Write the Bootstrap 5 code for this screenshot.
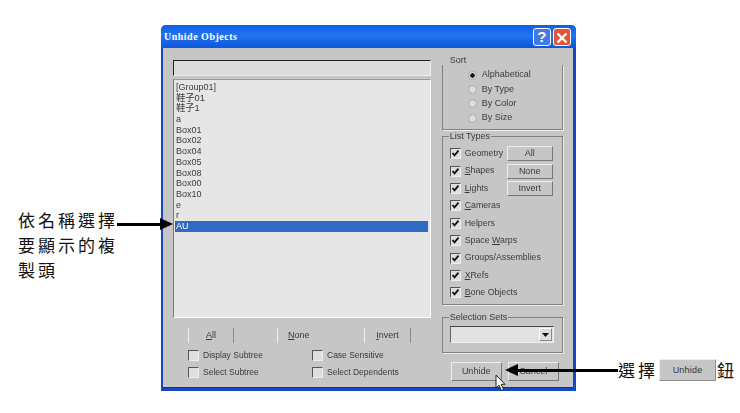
<!DOCTYPE html>
<html lang="zh-Hant">
<head>
    <meta charset="UTF-8">
    <meta name="viewport" content="width=device-width, initial-scale=1.0">
    <title>Unhide Objects</title>
    <link href="https://cdn.jsdelivr.net/npm/bootstrap@5.3.0/dist/css/bootstrap.min.css" rel="stylesheet">
    <style>
        body {
            background: #fff;
            width: 740px;
            height: 413px;
            overflow: hidden;
            position: relative;
            font-family: "Liberation Sans", Arial, sans-serif;
            color: #3a3a3a;
        }
        .sheet { padding-top: 25px; }
        .side-note {
            font-family: "Noto Sans CJK TC", sans-serif;
            font-size: 17px;
            color: #111;
        }
        .note-left {
            width: 161px;
            padding: 182px 0 0 18px;
            line-height: 25px;
            letter-spacing: 3px;
        }
        .note-right { padding: 332px 0 0 42px; letter-spacing: 3px; }
        .note-btn {
            width: 57px;
            height: 22px;
            margin: 0 1px 0 1px;
            background: #c6c6c6;
            border: 1px solid #8d8d8d;
            border-top-color: #eee;
            border-left-color: #eee;
            font: 9px/20px "Liberation Sans", sans-serif;
            letter-spacing: .2px;
            text-align: center;
            color: #333;
        }
        .dlg {
            width: 415px;
            height: 366px;
            background: #c6c6c6;
            border: solid #1648c4;
            border-width: 0 3px 3px 2px;
            border-radius: 5px 5px 0 0;
            box-shadow: inset 0 -1px 0 #0e2f9a;
            flex: none;
        }
        .dlg-title {
            height: 23px;
            margin: 0 -3px 0 -2px;
            padding: 0 5px 0 3px;
            border-radius: 5px 5px 0 0;
            background: linear-gradient(#0f5fe6, #2273ee 45%, #0b57dc);
            color: #fff;
            font: bold 10px "Liberation Serif", serif;
            letter-spacing: .5px;
        }
        .title-btn {
            width: 18px;
            height: 18px;
            margin-top: 1px;
            border: 1px solid #fff;
            border-radius: 3px;
            color: #fff;
            font: bold 15px/16px "Liberation Sans", sans-serif;
            text-align: center;
        }
        .tb-help { background: #3f7be8; }
        .tb-close { background: #e0563a; }
        .title-btns { gap: 2px; }
        .dlg-body { padding: 12px 10px 0 10px; gap: 11px; filter: blur(.3px); }
        .left-pane { width: 259px; }
        .right-pane { width: 122px; }
        .search-box {
            height: 16px;
            background: #dcdcdc;
            border: 1px solid #eee;
            border-top-color: #222;
            border-left-color: #222;
            margin-bottom: 3px;
        }
        .obj-list {
            height: 239px;
            background: #e6e6e6;
            border: 1px solid #fff;
            border-top-color: #999;
            border-left-color: #777;
            padding: 2px 2px 0 1px;
            font-size: 9px;
            line-height: 10.7px;
        }
        .obj-list li { padding-left: 1px; height: 10.7px; white-space: nowrap; }
        .obj-list .picked { background: #316ac5; color: #fff; }
        .cjk-row { font-family: "Liberation Sans", "Noto Sans CJK TC", sans-serif; font-size: 9.3px; }
        .sel-row { padding: 10px 0 0 15px; height: 28px; font-size: 9px; }
        .sel-item { border-right: 1px solid #888; border-left: 1px solid #eee; height: 15px; line-height: 14px; text-align: center; }
        .sel-a { width: 46px; }
        .sel-gap { width: 43px; }
        .sel-n { width: 87px; text-align: left; padding-left: 10px; border-right: 0; }
        .sel-i { width: 47px; }
        .opt-grid { padding: 3px 0 0 15px; row-gap: 4.5px; font-size: 8.5px; grid-template-columns: 124px 1fr; }
        .opt-cell { gap: 4px; }
        .box-chk {
            width: 11px;
            height: 11px;
            background: #dedede;
            border: 1px solid #eee;
            border-top-color: #555;
            border-left-color: #555;
            flex: none;
            display: flex;
        }
        .box-chk svg { width: 9px; height: 9px; }
        .grp {
            border: 1px solid #808080;
            box-shadow: 1px 1px 0 #eee;
            padding: 0;
        }
        .grp legend {
            float: none;
            width: auto;
            font-size: 9px;
            line-height: 9px;
            margin: 0 0 0 6px;
            padding: 0 1px;
        }
        .grp-sort { height: 70px; border-top: 0; margin-bottom: 2px; }
        .grp-sort legend { transform: translateY(-4px); }
        .grp-sort .radio-row:first-of-type { margin-top: -1px; }
        .grp-types { height: 173px; margin-bottom: 8px; padding-top: 4px; }
        .grp-sets { height: 40px; }
        .radio-row { padding-left: 25px; height: 14.3px; gap: 5px; font-size: 9px; }
        .radio-dot {
            width: 9px; height: 9px; border-radius: 50%;
            background: #dcdcdc;
            border: 1px solid #aaa;
            flex: none;
        }
        .radio-dot.on { background: radial-gradient(#111 40%, #ddd 50%); }
        .type-row { height: 17.4px; padding-left: 7px; gap: 4px; font-size: 8.8px; }
        .type-name { width: 38px; white-space: nowrap; }
        .raised {
            background: #c6c6c6;
            border: 1px solid #777;
            border-top-color: #eee;
            border-left-color: #eee;
            font-size: 9px;
            text-align: center;
            width: 46px;
            height: 15px;
            line-height: 13px;
        }
        .combo {
            height: 17px;
            margin: 4px 8px 0 7px;
            background: #e2e2e2;
            border: 1px solid #eee;
            border-top-color: #444;
            border-left-color: #666;
        }
        .combo-btn {
            width: 13px;
            height: 13px;
            margin: 1px;
            background: #ddd;
            border: 1px solid #888;
            border-top-color: #fff;
            border-left-color: #fff;
        }
        .action-row { padding: 9px 0 0 9px; gap: 6px; }
        .action-btn { width: 51px; height: 19px; line-height: 17px; }
        .callout { position: absolute; height: 3px; background: #000; }
        .tip-arrow { position: absolute; width: 0; height: 0; border-style: solid; }
        .callout-a { left: 117px; top: 223px; width: 44px; }
        .tip-a { left: 160px; top: 218px; border-width: 6.5px 0 6.5px 13px; border-color: transparent transparent transparent #000; }
        .callout-b { left: 518px; top: 369px; width: 100px; }
        .tip-b { left: 505px; top: 364px; border-width: 6.5px 13px 6.5px 0; border-color: transparent #000 transparent transparent; }
        .cursor-mark { position: absolute; left: 495px; top: 374px; width: 12px; height: 18px; }
    </style>
</head>
<body>
    <div class="sheet d-flex align-items-start">
        <div class="side-note note-left">依名稱選擇<br>要顯示的複<br>製頭</div>

        <div class="dlg">
            <div class="dlg-title d-flex align-items-center justify-content-between">
                <span>Unhide Objects</span>
                <span class="title-btns d-flex">
                    <span class="title-btn tb-help">?</span>
                    <span class="title-btn tb-close">
                        <svg width="12" height="12" viewBox="0 0 12 12"><path d="M1.5 1.5l9 9M10.5 1.5l-9 9" stroke="#fff" stroke-width="2.4"/></svg>
                    </span>
                </span>
            </div>

            <div class="dlg-body d-flex">
                <div class="left-pane">
                    <div class="search-box"></div>
                    <ul class="obj-list list-unstyled m-0">
                        <li>[Group01]</li>
                        <li class="cjk-row">鞋子01</li>
                        <li class="cjk-row">鞋子1</li>
                        <li>a</li>
                        <li>Box01</li>
                        <li>Box02</li>
                        <li>Box04</li>
                        <li>Box05</li>
                        <li>Box08</li>
                        <li>Box00</li>
                        <li>Box10</li>
                        <li>e</li>
                        <li>r</li>
                        <li class="picked">AU</li>
                    </ul>
                    <div class="sel-row d-flex">
                        <div class="sel-item sel-a"><u>A</u>ll</div>
                        <div class="sel-gap"></div>
                        <div class="sel-item sel-n"><u>N</u>one</div>
                        <div class="sel-item sel-i"><u>I</u>nvert</div>
                    </div>
                    <div class="opt-grid d-grid">
                        <div class="opt-cell d-flex align-items-center"><span class="box-chk"></span>Display Subtree</div>
                        <div class="opt-cell d-flex align-items-center"><span class="box-chk"></span>Case Sensitive</div>
                        <div class="opt-cell d-flex align-items-center"><span class="box-chk"></span>Select Subtree</div>
                        <div class="opt-cell d-flex align-items-center"><span class="box-chk"></span>Select Dependents</div>
                    </div>
                </div>

                <div class="right-pane">
                    <fieldset class="grp grp-sort">
                        <legend>Sort</legend>
                        <div class="radio-row d-flex align-items-center"><span class="radio-dot on"></span>Alphabetical</div>
                        <div class="radio-row d-flex align-items-center"><span class="radio-dot"></span>By Type</div>
                        <div class="radio-row d-flex align-items-center"><span class="radio-dot"></span>By Color</div>
                        <div class="radio-row d-flex align-items-center"><span class="radio-dot"></span>By Size</div>
                    </fieldset>
                    <fieldset class="grp grp-types">
                        <legend>List Types</legend>
                        <div class="type-row d-flex align-items-center"><span class="box-chk"><svg viewBox="0 0 9 9"><path d="M1.5 4l2 2.4L7.5 1.6" fill="none" stroke="#111" stroke-width="1.8"/></svg></span><span class="type-name">Geometry</span><span class="raised">All</span></div>
                        <div class="type-row d-flex align-items-center"><span class="box-chk"><svg viewBox="0 0 9 9"><path d="M1.5 4l2 2.4L7.5 1.6" fill="none" stroke="#111" stroke-width="1.8"/></svg></span><span class="type-name"><u>S</u>hapes</span><span class="raised">None</span></div>
                        <div class="type-row d-flex align-items-center"><span class="box-chk"><svg viewBox="0 0 9 9"><path d="M1.5 4l2 2.4L7.5 1.6" fill="none" stroke="#111" stroke-width="1.8"/></svg></span><span class="type-name"><u>L</u>ights</span><span class="raised">Invert</span></div>
                        <div class="type-row d-flex align-items-center"><span class="box-chk"><svg viewBox="0 0 9 9"><path d="M1.5 4l2 2.4L7.5 1.6" fill="none" stroke="#111" stroke-width="1.8"/></svg></span><span class="type-name"><u>C</u>ameras</span></div>
                        <div class="type-row d-flex align-items-center"><span class="box-chk"><svg viewBox="0 0 9 9"><path d="M1.5 4l2 2.4L7.5 1.6" fill="none" stroke="#111" stroke-width="1.8"/></svg></span><span class="type-name">Helpers</span></div>
                        <div class="type-row d-flex align-items-center"><span class="box-chk"><svg viewBox="0 0 9 9"><path d="M1.5 4l2 2.4L7.5 1.6" fill="none" stroke="#111" stroke-width="1.8"/></svg></span><span class="type-name">Space <u>W</u>arps</span></div>
                        <div class="type-row d-flex align-items-center"><span class="box-chk"><svg viewBox="0 0 9 9"><path d="M1.5 4l2 2.4L7.5 1.6" fill="none" stroke="#111" stroke-width="1.8"/></svg></span><span class="type-name">Groups/Assemblies</span></div>
                        <div class="type-row d-flex align-items-center"><span class="box-chk"><svg viewBox="0 0 9 9"><path d="M1.5 4l2 2.4L7.5 1.6" fill="none" stroke="#111" stroke-width="1.8"/></svg></span><span class="type-name"><u>X</u>Refs</span></div>
                        <div class="type-row d-flex align-items-center"><span class="box-chk"><svg viewBox="0 0 9 9"><path d="M1.5 4l2 2.4L7.5 1.6" fill="none" stroke="#111" stroke-width="1.8"/></svg></span><span class="type-name"><u>B</u>one Objects</span></div>
                    </fieldset>
                    <fieldset class="grp grp-sets">
                        <legend>Selection Sets</legend>
                        <div class="combo d-flex justify-content-end">
                            <span class="combo-btn d-flex align-items-center justify-content-center">
                                <svg width="7" height="4" viewBox="0 0 7 4"><path d="M0 0h7L3.5 4z" fill="#111"/></svg>
                            </span>
                        </div>
                    </fieldset>
                    <div class="action-row d-flex">
                        <div class="raised action-btn">Unhide</div>
                        <div class="raised action-btn">Cancel</div>
                    </div>
                </div>
            </div>
        </div>

        <div class="side-note note-right d-flex align-items-center">
            <span>選擇</span>
            <span class="note-btn">Unhide</span>
            <span>鈕</span>
        </div>
    </div>

    <div class="callout callout-a"></div>
    <div class="tip-arrow tip-a"></div>
    <div class="callout callout-b"></div>
    <div class="tip-arrow tip-b"></div>
    <svg class="cursor-mark" viewBox="0 0 12 18"><path d="M1 1v13l3-3 2.4 5.5 2.2-1-2.4-5.2H10z" fill="#fff" stroke="#222" stroke-width="1"/></svg>

    <script src="https://cdn.jsdelivr.net/npm/bootstrap@5.3.0/dist/js/bootstrap.bundle.min.js"></script>
</body>
</html>
